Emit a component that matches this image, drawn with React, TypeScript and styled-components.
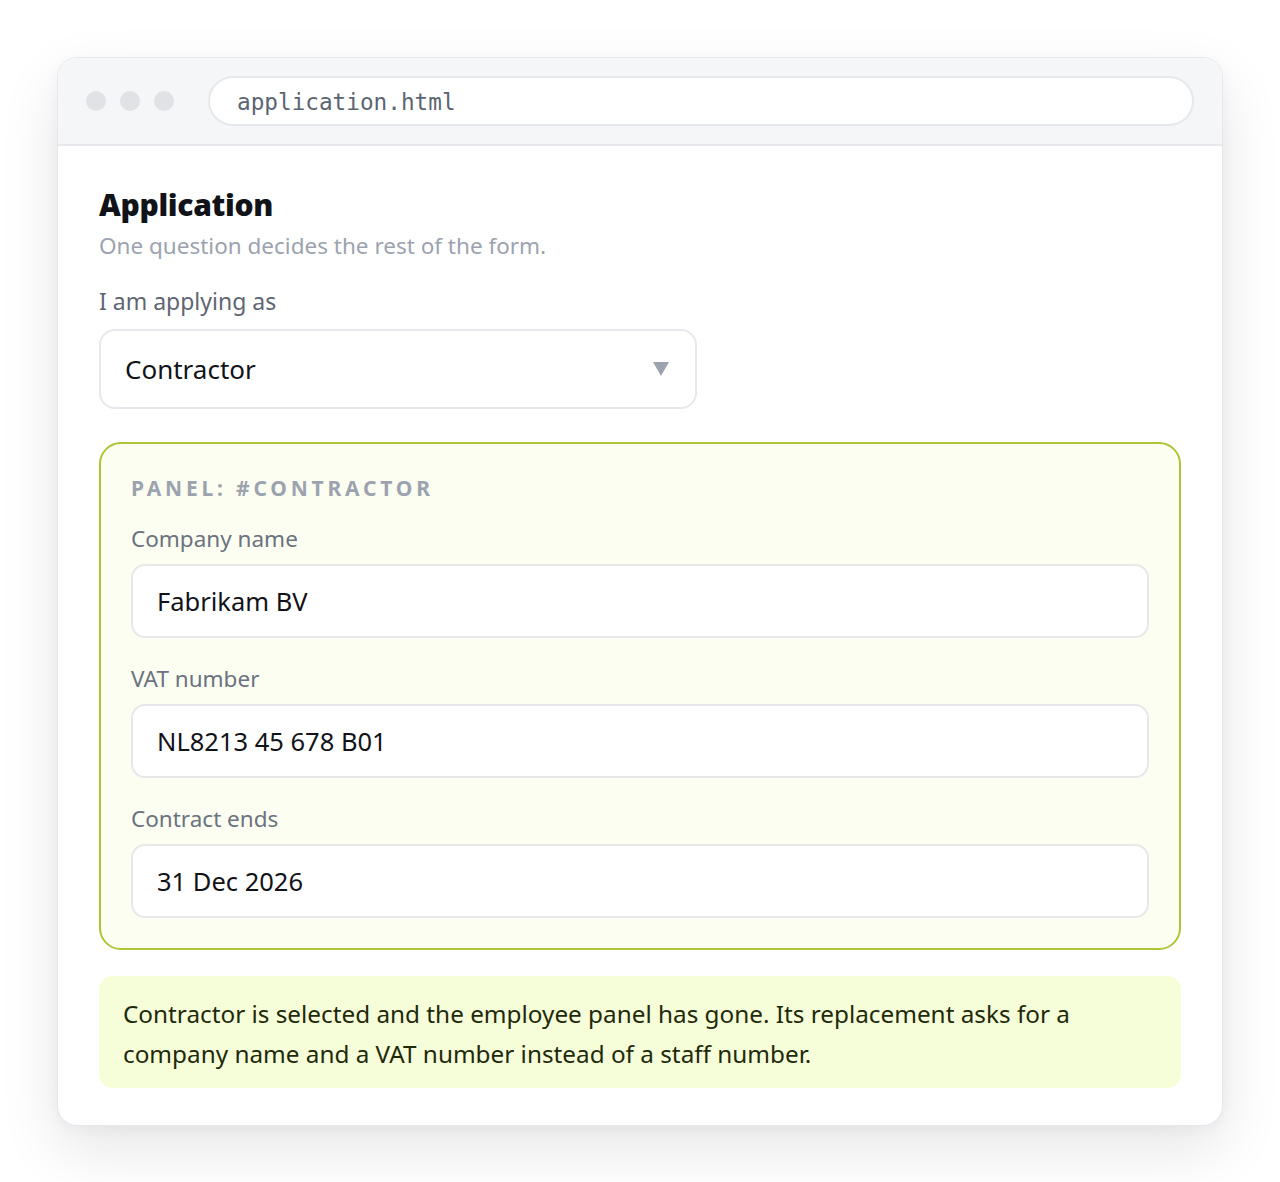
import styled, { createGlobalStyle } from "styled-components";

const GlobalStyle = createGlobalStyle`
  html, body {
    margin: 0;
    padding: 0;
    background: #ffffff;
  }
  body {
    font-family: "Noto Sans", "Open Sans", Arial, sans-serif;
  }
  * {
    box-sizing: border-box;
  }
`;

const Page = styled.div`
  padding: 57px 57px 58px 57px;
`;

const Window = styled.div`
  border: 1px solid #e6e8eb;
  border-radius: 20px;
  background: #ffffff;
  overflow: hidden;
  box-shadow: 0 24px 60px rgba(17, 24, 39, 0.1), 0 4px 14px rgba(17, 24, 39, 0.04);
`;

const TitleBar = styled.div`
  display: flex;
  align-items: center;
  gap: 34px;
  height: 88px;
  padding: 0 28px 0 28px;
  background: #f5f6f7;
  border-bottom: 2px solid #e6e8eb;
`;

const Dots = styled.div`
  display: flex;
  gap: 14px;
`;

const Dot = styled.span`
  width: 20px;
  height: 20px;
  border-radius: 50%;
  background: #e0e2e5;
`;

const UrlBar = styled.div`
  flex: 1;
  height: 50px;
  display: flex;
  align-items: center;
  padding: 2px 27px 0 27px;
  border: 2px solid #e6e8eb;
  border-radius: 25px;
  background: #ffffff;
  font-family: "DejaVu Sans Mono", "Liberation Mono", monospace;
  font-size: 22.7px;
  color: #5b6472;
`;

const Content = styled.div`
  padding: 41px 41px 37px 41px;
`;

const Heading = styled.h1`
  margin: 0;
  font-size: 30px;
  line-height: 36px;
  font-weight: 900;
  color: #111318;
  letter-spacing: -0.3px;
`;

const Subtitle = styled.p`
  margin: 6px 0 0 0;
  font-size: 22.5px;
  line-height: 34px;
  color: #9ca3af;
`;

const FieldLabel = styled.label<{ $muted?: boolean }>`
  display: block;
  font-size: 22.5px;
  line-height: 30px;
  color: ${({ $muted }) => ($muted ? "#6b7280" : "#5f6673")};
`;

const TopLabel = styled(FieldLabel)`
  margin-top: 23px;
  font-size: 23px;
`;

const Select = styled.div`
  margin-top: 13px;
  width: 598px;
  height: 80px;
  display: flex;
  align-items: center;
  justify-content: space-between;
  padding: 0 26px 0 24px;
  border: 2px solid #e6e8eb;
  border-radius: 16px;
  background: #ffffff;
  font-size: 26px;
  color: #111318;
`;

const Caret = styled.span`
  width: 0;
  height: 0;
  border-left: 8px solid transparent;
  border-right: 8px solid transparent;
  border-top: 14px solid #9ca3af;
`;

const Panel = styled.section`
  margin-top: 33px;
  padding: 30px 30px 30px 30px;
  border: 2px solid #adc637;
  border-radius: 22px;
  background: #fbfef0;
`;

const PanelTag = styled.div`
  font-size: 21px;
  line-height: 28px;
  font-weight: 700;
  letter-spacing: 3.8px;
  text-transform: uppercase;
  color: #9ca3af;
`;

const Field = styled.div<{ $first?: boolean }>`
  display: flex;
  flex-direction: column;
  gap: 10px;
  margin-top: ${({ $first }) => ($first ? "22px" : "26px")};
`;

const Input = styled.div`
  height: 74px;
  flex-shrink: 0;
  display: flex;
  align-items: center;
  padding: 0 24px;
  border: 2px solid #e6e8eb;
  border-radius: 14px;
  background: #ffffff;
  font-size: 25.5px;
  color: #111318;
`;

const Note = styled.div`
  margin-top: 26px;
  padding: 18px 24px 14px 24px;
  border-radius: 14px;
  background: #f6fdd9;
  font-size: 24.3px;
  line-height: 40px;
  color: #1f2a0b;
`;

const NoteText = styled.p`
  margin: 0;
`;

const fields = [
  { label: "Company name", value: "Fabrikam BV" },
  { label: "VAT number", value: "NL8213 45 678 B01" },
  { label: "Contract ends", value: "31 Dec 2026" },
];

export default function App() {
  return (
    <>
      <GlobalStyle />
      <Page>
        <Window>
          <TitleBar>
            <Dots>
              <Dot />
              <Dot />
              <Dot />
            </Dots>
            <UrlBar>application.html</UrlBar>
          </TitleBar>
          <Content>
            <Heading>Application</Heading>
            <Subtitle>One question decides the rest of the form.</Subtitle>
            <TopLabel>I am applying as</TopLabel>
            <Select>
              <span>Contractor</span>
              <Caret />
            </Select>
            <Panel>
              <PanelTag>Panel: #contractor</PanelTag>
              {fields.map((f, i) => (
                <Field key={f.label} $first={i === 0}>
                  <FieldLabel $muted>{f.label}</FieldLabel>
                  <Input>{f.value}</Input>
                </Field>
              ))}
            </Panel>
            <Note>
              <NoteText>
                Contractor is selected and the employee panel has gone. Its
                replacement asks for a company name and a VAT number instead of
                a staff number.
              </NoteText>
            </Note>
          </Content>
        </Window>
      </Page>
    </>
  );
}
